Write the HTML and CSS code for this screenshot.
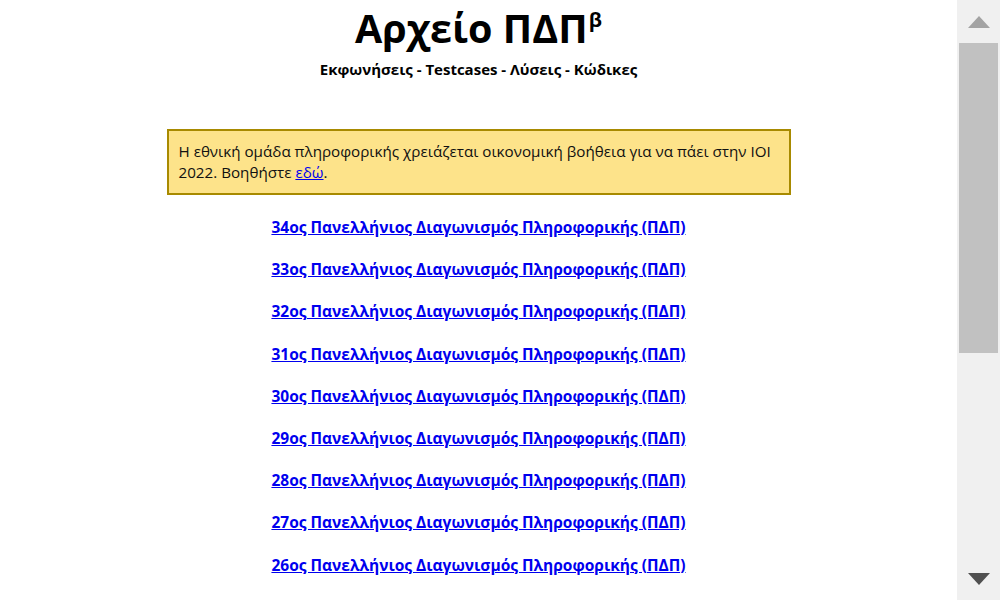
FILE: index.html
```html
<!DOCTYPE html>
<html lang="el">
<head>
<meta charset="utf-8">
<title>Αρχείο ΠΔΠ</title>
<link rel="stylesheet" href="styles.css">
</head>
<body>
<div class="frame">
  <main class="page">
    <header class="head">
      <h1 class="title">Αρχείο ΠΔΠ<sup class="beta">β</sup></h1>
      <p class="subtitle">Εκφωνήσεις - Testcases - Λύσεις - Κώδικες</p>
    </header>
    <div class="notice">Η εθνική ομάδα πληροφορικής χρειάζεται οικονομική βοήθεια για να πάει στην ΙΟΙ 2022. Βοηθήστε <a href="#">εδώ</a>.</div>
    <ul class="list">
      <li><a href="#">34ος Πανελλήνιος Διαγωνισμός Πληροφορικής (ΠΔΠ)</a></li>
      <li><a href="#">33ος Πανελλήνιος Διαγωνισμός Πληροφορικής (ΠΔΠ)</a></li>
      <li><a href="#">32ος Πανελλήνιος Διαγωνισμός Πληροφορικής (ΠΔΠ)</a></li>
      <li><a href="#">31ος Πανελλήνιος Διαγωνισμός Πληροφορικής (ΠΔΠ)</a></li>
      <li><a href="#">30ος Πανελλήνιος Διαγωνισμός Πληροφορικής (ΠΔΠ)</a></li>
      <li><a href="#">29ος Πανελλήνιος Διαγωνισμός Πληροφορικής (ΠΔΠ)</a></li>
      <li><a href="#">28ος Πανελλήνιος Διαγωνισμός Πληροφορικής (ΠΔΠ)</a></li>
      <li><a href="#">27ος Πανελλήνιος Διαγωνισμός Πληροφορικής (ΠΔΠ)</a></li>
      <li><a href="#">26ος Πανελλήνιος Διαγωνισμός Πληροφορικής (ΠΔΠ)</a></li>
    </ul>
  </main>
  <div class="scrollbar" aria-hidden="true">
    <div class="sb-btn">
      <svg width="22" height="12" viewBox="0 0 22 12"><path d="M11 0 L22 12 L0 12 Z" fill="#a3a3a3"/></svg>
    </div>
    <div class="sb-track">
      <div class="sb-thumb"></div>
    </div>
    <div class="sb-btn">
      <svg width="22" height="12" viewBox="0 0 22 12"><path d="M0 0 L22 0 L11 12 Z" fill="#505050"/></svg>
    </div>
  </div>
</div>
</body>
</html>
```
FILE: styles.css
```css
html, body {
  margin: 0;
  padding: 0;
  height: 100%;
  overflow: hidden;
  background: #ffffff;
}
body {
  font-family: "Open Sans", "Noto Sans", sans-serif;
  color: #000;
}
.frame {
  display: flex;
  height: 100vh;
}
.page {
  flex: 1;
  overflow: hidden;
  display: flex;
  flex-direction: column;
  align-items: center;
}
.head {
  text-align: center;
}
.title {
  margin: 3px 0 0;
  font-size: 39.5px;
  font-weight: 700;
  line-height: 50px;
}
.beta {
  font-size: 20px;
  vertical-align: top;
  line-height: 20px;
  position: relative;
  top: 7px;
  margin-left: 1px;
}
.subtitle {
  margin: 6px 0 0;
  font-size: 15px;
  font-weight: 700;
  line-height: 20px;
}
.notice {
  margin-top: 50px;
  width: 600px;
  padding: 10px 10px;
  background: #fde38a;
  border: 2px solid #a88a00;
  font-size: 15.2px;
  line-height: 21px;
  color: #111;
}
.notice a {
  color: #0000ee;
}
.list {
  list-style: none;
  margin: 21px 0 0;
  padding: 0;
  display: flex;
  flex-direction: column;
  align-items: center;
  gap: 20.2px;
}
.list li {
  font-size: 15.5px;
  font-weight: 700;
  line-height: 22px;
}
.list a {
  color: #0000ee;
}
.scrollbar {
  width: 43px;
  flex: none;
  background: #f0f0f0;
  display: flex;
  flex-direction: column;
}
.sb-btn {
  height: 43px;
  flex: none;
  display: flex;
  align-items: center;
  justify-content: center;
  padding-left: 1px;
}
.sb-track {
  flex: 1;
  padding: 0 2px;
}
.sb-thumb {
  height: 310px;
  background: #c1c1c1;
}
```
